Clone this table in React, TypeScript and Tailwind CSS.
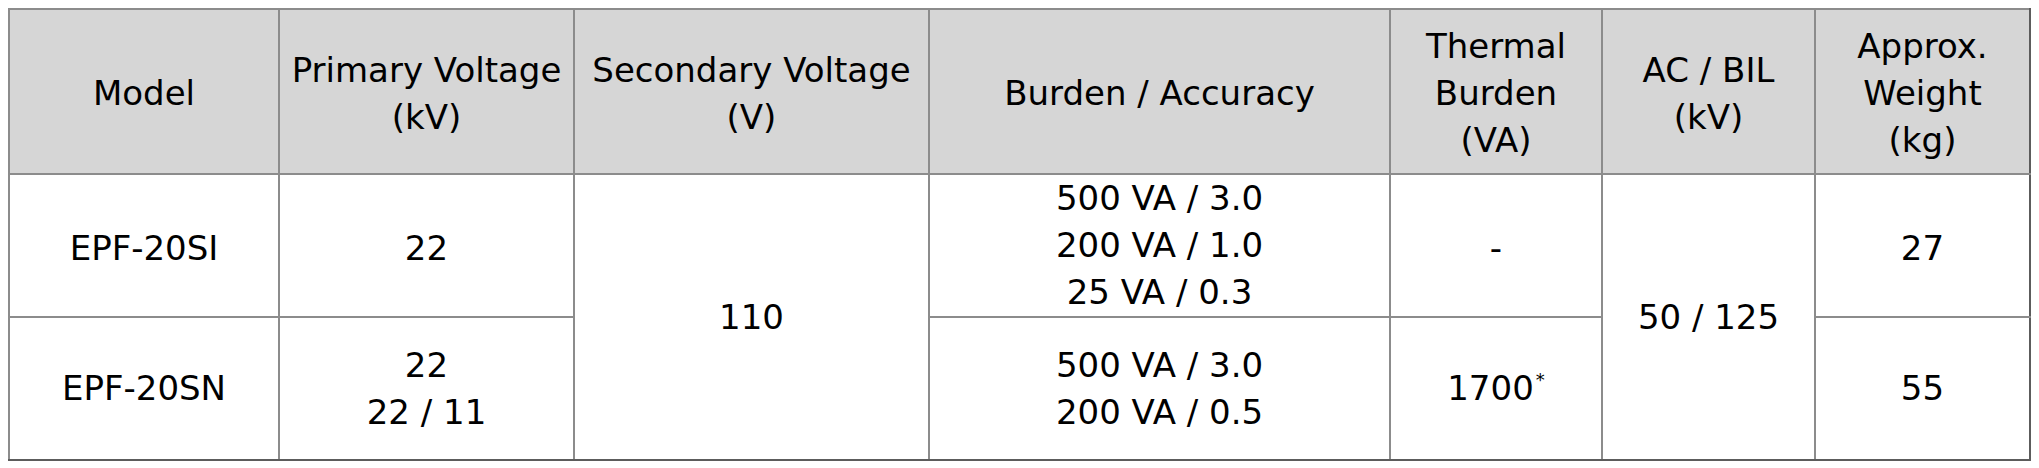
const cell = "border-2 border-[#8c8c8c] p-0 text-center align-middle"
const head = `${cell} pt-[4px] font-normal`

export default function App() {
  return (
    <div className="min-h-screen bg-white pl-[8px] pt-[8px] text-black" style={{ fontFamily: '"DejaVu Sans", sans-serif' }}>
      <table className="w-[2021px] table-fixed border-collapse text-[34px]">
        <colgroup>
          <col className="w-[270px]" />
          <col className="w-[295px]" />
          <col className="w-[355px]" />
          <col className="w-[461px]" />
          <col className="w-[212px]" />
          <col className="w-[213px]" />
          <col className="w-[215px]" />
        </colgroup>
        <thead>
          <tr className="h-[165px] bg-[#d6d6d6] leading-[47px]">
            <th className={head}>Model</th>
            <th className={head}>
              Primary Voltage
              <br />
              (kV)
            </th>
            <th className={head}>
              Secondary Voltage
              <br />
              (V)
            </th>
            <th className={head}>Burden / Accuracy</th>
            <th className={head}>
              Thermal
              <br />
              Burden
              <br />
              (VA)
            </th>
            <th className={head}>
              AC / BIL
              <br />
              (kV)
            </th>
            <th className={`${head} border-r-[#5c5c5c]`}>
              Approx.
              <br />
              Weight
              <br />
              (kg)
            </th>
          </tr>
        </thead>
        <tbody className="leading-[47px]">
          <tr className="h-[142px]">
            <td className={`${cell} pt-[5px]`}>EPF-20SI</td>
            <td className={`${cell} pt-[5px]`}>22</td>
            <td rowSpan={2} className={`${cell} border-b-[#5c5c5c]`}>
              110
            </td>
            <td className={cell}>
              500 VA / 3.0
              <br />
              200 VA / 1.0
              <br />
              25 VA / 0.3
            </td>
            <td className={`${cell} pt-[5px]`}>-</td>
            <td rowSpan={2} className={`${cell} border-b-[#5c5c5c]`}>
              50 / 125
            </td>
            <td className={`${cell} border-r-[#5c5c5c] pt-[5px]`}>27</td>
          </tr>
          <tr className="h-[143px]">
            <td className={`${cell} border-b-[#5c5c5c]`}>EPF-20SN</td>
            <td className={`${cell} border-b-[#5c5c5c]`}>
              22
              <br />
              22 / 11
            </td>
            <td className={`${cell} border-b-[#5c5c5c]`}>
              500 VA / 3.0
              <br />
              200 VA / 0.5
            </td>
            <td className={`${cell} border-b-[#5c5c5c] pt-[4px]`}>
              1700
              <span className="relative -top-[14px] ml-[2px] text-[18px]">*</span>
            </td>
            <td className={`${cell} border-b-[#5c5c5c] border-r-[#5c5c5c]`}>55</td>
          </tr>
        </tbody>
      </table>
    </div>
  )
}
